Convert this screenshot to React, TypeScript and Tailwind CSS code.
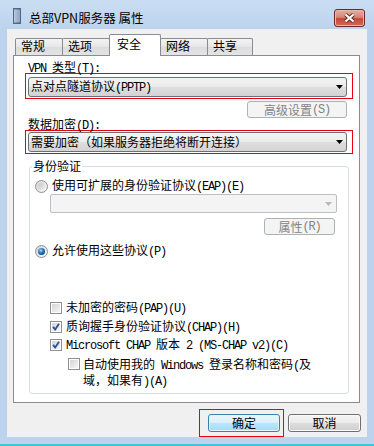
import React from "react";

/** Splits a label into CJK runs and half-width ASCII runs, like SimSun 12px. */
function Txt({ s }: { s: string }) {
  const parts = s.match(/[\x00-\x7f]+|[^\x00-\x7f]+/g) ?? [];
  return (
    <>
      {parts.map((p, i) =>
        p.charCodeAt(0) < 128 ? (
          <span
            key={i}
            className="whitespace-pre font-['Liberation_Mono',monospace] text-[12px] tracking-[-1.2px]"
          >
            {p}
          </span>
        ) : (
          <span key={i}>{p}</span>
        ),
      )}
    </>
  );
}

function Arrow({ color = "#000" }: { color?: string }) {
  return (
    <svg width="7" height="4" viewBox="0 0 7 4">
      <path d="M0 0h7L3.5 4z" fill={color} />
    </svg>
  );
}

function Combo({ text, w }: { text: string; w: string }) {
  return (
    <div
      className={`${w} flex h-[20px] items-center justify-between rounded-[3px] border border-[#707070] bg-[linear-gradient(to_bottom,#f4f4f4,#ebebeb_50%,#dfdfdf_50%,#d3d3d3)] pl-[2px] pr-[3px] leading-[14px]`}
    >
      <span>
        <Txt s={text} />
      </span>
      <Arrow />
    </div>
  );
}

function Btn({
  text,
  w,
  h = "h-[18px]",
  kind = "normal",
}: {
  text: string;
  w: string;
  h?: string;
  kind?: "normal" | "primary" | "disabled";
}) {
  const look =
    kind === "disabled"
      ? "border-[#adb2b5] bg-[#f4f4f4] text-[#838383]"
      : kind === "primary"
        ? "border-[#3c7fb1] bg-[linear-gradient(to_bottom,#eaf6fd,#d9f0fc_50%,#bee6fd_50%,#a7d9f5)] shadow-[inset_0_0_0_1px_#e6f5fd]"
        : "border-[#707070] bg-[linear-gradient(to_bottom,#f4f4f4,#ebebeb_50%,#dddddd_50%,#cfcfcf)] shadow-[inset_0_0_0_1px_#fafafa]";
  return (
    <div
      className={`${w} ${h} ${look} flex items-center justify-center rounded-[3px] border leading-[14px]`}
    >
      <Txt s={text} />
    </div>
  );
}

function Radio({ on }: { on?: boolean }) {
  return (
    <div className="flex h-[13px] w-[13px] shrink-0 items-center justify-center rounded-full border border-[#8e8f8f] bg-[linear-gradient(135deg,#d2d2d2,#fbfbfb)]">
      {on ? (
        <div className="h-[7px] w-[7px] rounded-full bg-[radial-gradient(circle_at_40%_35%,#9fdcff,#1a6fb8_45%,#0a3466)]" />
      ) : (
        <div className="h-[7px] w-[7px] rounded-full bg-[linear-gradient(135deg,#c6c6c6,#efefef)]" />
      )}
    </div>
  );
}

function Check({ on }: { on?: boolean }) {
  return (
    <div className="h-[12px] w-[12px] shrink-0 border border-[#8e8f8f] bg-white p-[1px]">
      <div className="relative h-full w-full bg-[linear-gradient(135deg,#d4d4d4,#f6f6f6)]">
        {on && (
          <svg className="absolute left-0 top-0" width="8" height="8" viewBox="0 0 8 8">
            <path
              d="M1 3.8L3.2 6.4L7 0.8"
              fill="none"
              stroke="#2e4f9e"
              strokeWidth="1.8"
            />
          </svg>
        )}
      </div>
    </div>
  );
}

function TitleIcon() {
  return (
    <svg width="8" height="16" viewBox="0 0 8 16" className="ml-[13px] mt-[8px]">
      <defs>
        <linearGradient id="srv" x1="0" x2="1" y1="0" y2="0">
          <stop offset="0" stopColor="#9fb6d2" />
          <stop offset="1" stopColor="#56739a" />
        </linearGradient>
      </defs>
      <rect x="0.5" y="0.5" width="7" height="15" fill="url(#srv)" stroke="#4d6689" />
      {[3, 5, 7, 9, 11, 13].map((y) => (
        <path key={y} d={`M1 ${y}h6`} stroke="#dfe8f3" strokeWidth="0.8" />
      ))}
    </svg>
  );
}

function CloseButton() {
  return (
    <div className="ml-auto mr-[9px] mt-[9px] flex h-[18px] w-[31px] items-center justify-center rounded-[3px] border border-[#6b2a24] bg-[linear-gradient(to_bottom,#e8aca2,#d9867a_45%,#c4493a_55%,#d26a54)] shadow-[inset_0_0_0_1px_#eab7ae]">
      <svg width="13" height="10" viewBox="0 0 13 10">
        <path d="M2.5 1.5L10.5 8.5M10.5 1.5L2.5 8.5" stroke="#5b2b28" strokeWidth="4" />
        <path d="M2.5 1.5L10.5 8.5M10.5 1.5L2.5 8.5" stroke="#fff" strokeWidth="2.2" />
      </svg>
    </div>
  );
}

const tabs = [
  { label: "常规", w: "w-[48px]" },
  { label: "选项", w: "w-[48px]" },
  { label: "安全", w: "w-[52px]", active: true },
  { label: "网络", w: "w-[48px]" },
  { label: "共享", w: "w-[46px]" },
];

export default function App() {
  return (
    <div className="h-[446px] w-[374px] overflow-hidden bg-[#3cc6e2] font-['Noto_Sans_CJK_SC','Noto_Sans',sans-serif] text-[12px] text-black">
      <div className="flex h-[444px] flex-col bg-[#bdd3ed]">
        {/* title bar */}
        <div className="flex h-[29px] items-start bg-[linear-gradient(to_bottom,#cadef3,#bdd3ed)]">
          <TitleIcon />
          <span className="ml-[8px] mt-[10px] text-[12.5px] leading-[16px]">总部VPN服务器 属性</span>
          <CloseButton />
        </div>

        <div className="mx-[7px] flex h-[408px] flex-col bg-[#f0f0f0] pt-[5px]">
          {/* tabs */}
          <div className="flex h-[21px] items-end pl-[8px]">
            {tabs.map((t, i) =>
              t.active ? (
                <div
                  key={t.label}
                  className={`${t.w} relative z-10 -mb-px -ml-px h-[22px] rounded-t-[2px] border border-b-0 border-[#898c95] bg-white pl-[7px] pt-[2px] leading-[14px]`}
                >
                  {t.label}
                </div>
              ) : (
                <div
                  key={t.label}
                  className={`${t.w} ${i > 0 ? "-ml-px" : ""} h-[17px] rounded-t-[2px] border border-b-0 border-[#898c95] bg-[linear-gradient(to_bottom,#f3f3f3,#e6e6e6_50%,#dcdcdc_50%,#e4e4e4)] pl-[5px] leading-[14px]`}
                >
                  {t.label}
                </div>
              ),
            )}
          </div>

          {/* tab page */}
          <div className="ml-[6px] h-[348px] w-[347px] border border-[#898c95] bg-white pl-[14px] pt-[5px]">
            <div className="h-[12px] leading-[12px]">
              <Txt s="VPN 类型(T):" />
            </div>
            <div className="-ml-[3px] w-[328px] border border-[#e60012] pb-[1px] pl-[2px] pt-[3px]">
              <Combo w="w-[319px]" text="点对点隧道协议(PPTP)" />
            </div>
            <div className="mt-[2px] flex w-[319px] justify-end">
              <Btn text="高级设置(S)" w="w-[100px]" h="h-[17px]" kind="disabled" />
            </div>
            <div className="h-[12px] leading-[12px]">
              <Txt s="数据加密(D):" />
            </div>
            <div className="-ml-[3px] w-[328px] border border-[#e60012] py-[1px] pl-[2px]">
              <Combo w="w-[319px]" text="需要加密（如果服务器拒绝将断开连接）" />
            </div>

            <fieldset className="ml-[1px] mt-[6px] w-[320px] rounded-[3px] border border-[#d5dfe5] pb-[4px] pl-[5px]">
              <legend className="-ml-[3px] px-[1px] leading-[12px]">身份验证</legend>

              <div className="mt-[7px] flex h-[14px] items-center gap-[4px] leading-[14px]">
                <Radio />
                <span>
                  <Txt s="使用可扩展的身份验证协议(EAP)(E)" />
                </span>
              </div>
              <div className="ml-[15px] mt-[1px] flex h-[19px] w-[287px] items-center justify-end rounded-[2px] border border-[#bcbfc3] bg-[#f4f4f4] pr-[4px]">
                <Arrow color="#b9b9b9" />
              </div>
              <div className="ml-[229px] mt-[5px]">
                <Btn text="属性(R)" w="w-[71px]" h="h-[17px]" kind="disabled" />
              </div>
              <div className="mt-[9px] flex h-[14px] items-center gap-[4px] leading-[14px]">
                <Radio on />
                <span>
                  <Txt s="允许使用这些协议(P)" />
                </span>
              </div>

              <div className="ml-[15px] mt-[43px] flex h-[14px] items-center gap-[4px] leading-[14px]">
                <Check />
                <span>
                  <Txt s="未加密的密码(PAP)(U)" />
                </span>
              </div>
              <div className="ml-[15px] mt-[5px] flex h-[14px] items-center gap-[4px] leading-[14px]">
                <Check on />
                <span>
                  <Txt s="质询握手身份验证协议(CHAP)(H)" />
                </span>
              </div>
              <div className="ml-[15px] mt-[4px] flex h-[14px] items-center gap-[4px] leading-[14px]">
                <Check on />
                <span>
                  <Txt s="Microsoft CHAP 版本 2 (MS-CHAP v2)(C)" />
                </span>
              </div>
              <div className="ml-[33px] mt-[5px] flex items-start gap-[3px]">
                <div className="mt-[1px]">
                  <Check />
                </div>
                <div className="leading-[13px]">
                  <Txt s="自动使用我的 Windows 登录名称和密码(及" />
                  <br />
                  <Txt s="域，如果有)(A)" />
                </div>
              </div>
            </fieldset>
          </div>

          {/* dialog buttons */}
          <div className="mt-[6px] flex items-start justify-end pr-[6px]">
            <div className="border border-[#e60012] py-[4px] pl-[8px] pr-[3px]">
              <Btn text="确定" w="w-[72px]" kind="primary" />
            </div>
            <div className="ml-[4px] mt-[5px]">
              <Btn text="取消" w="w-[73px]" />
            </div>
          </div>
        </div>
      </div>
    </div>
  );
}
